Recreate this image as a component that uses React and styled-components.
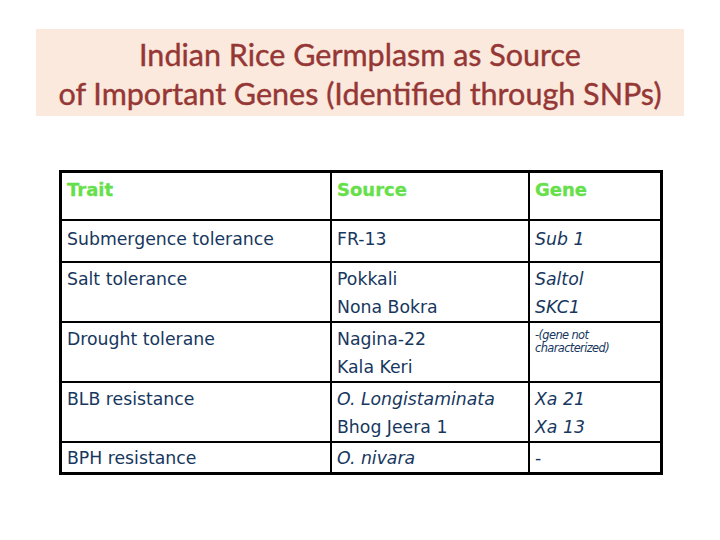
import styled, { createGlobalStyle } from "styled-components";

const GlobalStyle = createGlobalStyle`
  html, body {
    margin: 0;
    padding: 0;
    background: #ffffff;
  }
`;

const Slide = styled.div`
  width: 720px;
  height: 540px;
  padding: 29px 36px 0 36px;
  box-sizing: border-box;
  display: flex;
  flex-direction: column;
  align-items: flex-start;
`;

const TitleBox = styled.h1`
  margin: 0;
  width: 648px;
  height: 87px;
  box-sizing: border-box;
  background: #fbe9dd;
  color: #953735;
  font-family: Lato, "Open Sans", sans-serif;
  font-weight: 400;
  font-size: 30.5px;
  line-height: 39px;
  text-align: center;
  padding-top: 6px;
  -webkit-text-stroke: 0.4px #953735;
`;

const Table = styled.table`
  margin: 54px 0 0 23px;
  border-collapse: collapse;
  border: 3px solid #000;
  font-family: "DejaVu Sans", Verdana, sans-serif;
  color: #17375e;
  table-layout: fixed;
`;

const Row = styled.tr`
  height: ${(p) => p.$h}px;
`;

const Cell = styled.td`
  border: 2px solid #000;
  vertical-align: top;
  padding: ${(p) => p.$pt ?? 0}px 5px 0 5px;
  font-size: 17.3px;
  line-height: 28px;
  width: ${(p) => p.$w}px;
  white-space: nowrap;
`;

const HeadCell = styled(Cell)`
  color: #66e04a;
  font-weight: 700;
  font-size: 18px;
  line-height: 30px;
  -webkit-text-stroke: 0.3px #66e04a;
`;

const Line = styled.div`
  font-style: ${(p) => (p.$italic ? "italic" : "normal")};
`;

const Note = styled.div`
  font-size: 11.4px;
  line-height: 13px;
  font-style: italic;
  padding-top: 4px;
  letter-spacing: -0.6px;
`;

const rows = [
  { h: 42, pt: 4, trait: "Submergence tolerance", source: [["FR-13"]], gene: [["Sub 1", true]] },
  { h: 58, pt: 2, trait: "Salt tolerance", source: [["Pokkali"], ["Nona Bokra"]], gene: [["Saltol", true], ["SKC1", true]] },
  { h: 58, pt: 2, trait: "Drought tolerane", source: [["Nagina-22"], ["Kala Keri"]], note: true },
  { h: 58, pt: 2, trait: "BLB resistance", source: [["O. Longistaminata", true], ["Bhog Jeera 1"]], gene: [["Xa 21", true], ["Xa 13", true]] },
  { h: 29, pt: 1, trait: "BPH resistance", source: [["O. nivara", true]], gene: [["-"]] },
];

export default function App() {
  return (
    <>
      <GlobalStyle />
      <Slide>
        <TitleBox>
          Indian Rice Germplasm as Source
          <br />
          of Important Genes (Identified through SNPs)
        </TitleBox>
        <Table>
          <tbody>
            <Row $h={48}>
              <HeadCell $w={258} $pt={2}>Trait</HeadCell>
              <HeadCell $w={186} $pt={2}>Source</HeadCell>
              <HeadCell $w={120} $pt={2}>Gene</HeadCell>
            </Row>
            {rows.map((r) => (
              <Row key={r.trait} $h={r.h}>
                <Cell $pt={r.pt}>{r.trait}</Cell>
                <Cell $pt={r.pt}>
                  {r.source.map(([t, it]) => (
                    <Line key={t} $italic={it}>{t}</Line>
                  ))}
                </Cell>
                <Cell $pt={r.pt}>
                  {r.note ? (
                    <Note>
                      -(gene not
                      <br />
                      characterized)
                    </Note>
                  ) : (
                    r.gene.map(([t, it]) => (
                      <Line key={t} $italic={it}>{t}</Line>
                    ))
                  )}
                </Cell>
              </Row>
            ))}
          </tbody>
        </Table>
      </Slide>
    </>
  );
}
